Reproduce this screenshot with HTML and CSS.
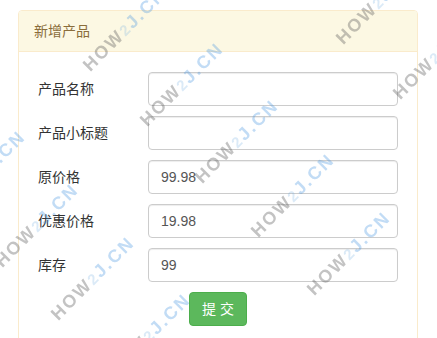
FILE: index.html
```html
<!DOCTYPE html>
<html>

<head>
  <meta charset="UTF-8">
  <meta name="viewport" content="width=device-width, initial-scale=1">
  <title>新增产品</title>
  <link rel="stylesheet" href="styles.css">
</head>

<body>
  <div class="container">
    <div class="panel">
      <div class="panel-heading">新增产品</div>
      <form class="panel-body">
        <label class="label" for="name">产品名称</label>
        <input class="input" id="name" type="text" value="">

        <label class="label" for="subTitle">产品小标题</label>
        <input class="input" id="subTitle" type="text" value="">

        <label class="label" for="orignalPrice">原价格</label>
        <input class="input" id="orignalPrice" type="text" value="99.98">

        <label class="label" for="promotePrice">优惠价格</label>
        <input class="input" id="promotePrice" type="text" value="19.98">

        <label class="label" for="stock">库存</label>
        <input class="input" id="stock" type="text" value="99">

        <div class="submit-row">
          <button class="btn-success" type="submit">提 交</button>
        </div>
      </form>
    </div>
  </div>

  <!-- site watermark -->
  <div class="watermarks">
    <span class="mark m1">HOW<i>2</i><b>J.CN</b></span>
    <span class="mark m2">HOW<i>2</i><b>J.CN</b></span>
    <span class="mark m3">HOW<i>2</i><b>J.CN</b></span>
    <span class="mark m4">HOW<i>2</i><b>J.CN</b></span>
    <span class="mark m5">HOW<i>2</i><b>J.CN</b></span>
    <span class="mark m6">HOW<i>2</i><b>J.CN</b></span>
    <span class="mark m7">HOW<i>2</i><b>J.CN</b></span>
    <span class="mark m8">HOW<i>2</i><b>J.CN</b></span>
    <span class="mark m9">HOW<i>2</i><b>J.CN</b></span>
    <span class="mark m10">HOW<i>2</i><b>J.CN</b></span>
    <span class="mark m11">HOW<i>2</i><b>J.CN</b></span>
  </div>
</body>

</html>
```

FILE: styles.css
```css
*{
  box-sizing: border-box;
  padding: 0;
  margin: 0;
}

html{
  overflow: hidden;
}

body{
  font-family: "Liberation Sans", "Noto Sans CJK SC", sans-serif;
  font-size: 14px;
  line-height: 20px;
  color: #333;
  background: #fff;
}

.container{
  padding: 10px 19px 0 18px;
}

.panel{
  width: 400px;
  border: 1px solid #faebcc;
  border-radius: 4px;
  background: #fff;
}

.panel-heading{
  padding: 10px 15px;
  background: #fcf8e3;
  color: #8a6d3b;
  border-bottom: 1px solid #faebcc;
  border-radius: 3px 3px 0 0;
}

.panel-body{
  display: grid;
  grid-template-columns: 110px 1fr;
  row-gap: 10px;
  align-items: center;
  padding: 20px 19px 15px 19px;
}

.label{
  color: #333;
}

.input{
  height: 34px;
  width: 100%;
  padding: 6px 12px;
  font-family: inherit;
  font-size: 14px;
  color: #555;
  border: 1px solid #ccc;
  border-radius: 4px;
  box-shadow: inset 0 1px 1px rgba(0,0,0,.075);
  outline: none;
}

.submit-row{
  grid-column: 1 / 3;
  display: flex;
  justify-content: center;
}

.btn-success{
  height: 34px;
  padding: 6px 12px;
  font-family: inherit;
  font-size: 14px;
  line-height: 20px;
  color: #fff;
  background: #5cb85c;
  border: 1px solid #4cae4c;
  border-radius: 4px;
  cursor: pointer;
}

/* watermark overlay */
.watermarks{
  position: fixed;
  top: 0;
  left: 0;
  right: 0;
  bottom: 0;
  overflow: hidden;
  pointer-events: none;
}

.mark{
  position: absolute;
  white-space: nowrap;
  font-family: "Liberation Sans", sans-serif;
  font-size: 18px;
  font-weight: bold;
  line-height: 18px;
  letter-spacing: 2px;
  color: rgba(90,90,90,.36);
  transform: rotate(-45deg);
  transform-origin: 0 100%;
}

.mark i{
  font-style: normal;
  font-size: 15px;
  color: rgba(110,170,225,.25);
}

.mark b{
  color: rgba(70,150,225,.33);
}

.m1{ left: 93px; top: 56px; }
.m2{ left: 150px; top: 111px; }
.m3{ left: -48px; top: 199px; }
.m4{ left: 5px; top: 252px; }
.m5{ left: 61px; top: 305px; }
.m6{ left: 117px; top: 362px; }
.m7{ left: 346px; top: 29px; }
.m8{ left: 403px; top: 84px; }
.m9{ left: 205px; top: 168px; }
.m10{ left: 261px; top: 222px; }
.m11{ left: 317px; top: 280px; }
```
